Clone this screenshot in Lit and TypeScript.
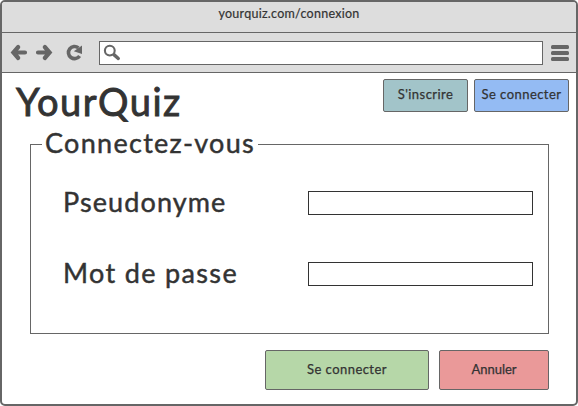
import { LitElement, html, css } from "lit";
import { customElement } from "lit/decorators.js";

@customElement("app-root")
export class AppRoot extends LitElement {
  static styles = css`
    :host {
      display: block;
      width: 578px;
      height: 406px;
      overflow: hidden;
      background: #fff;
      color: #333;
      font-family: Lato, "Liberation Sans", sans-serif;
    }
    * { box-sizing: border-box; }
    .window {
      width: 578px;
      height: 406px;
      border: 2px solid #666;
      border-radius: 5px;
      overflow: hidden;
      display: flex;
      flex-direction: column;
      background: #fff;
    }
    .titlebar {
      height: 31px;
      flex: none;
      border-bottom: 1px solid #666;
      background: #ddd;
      text-align: center;
      font-size: 12.5px;
      line-height: 24px;
      letter-spacing: 0.27px;
      -webkit-text-stroke: 0.2px #333;
    }
    .toolbar {
      height: 40px;
      flex: none;
      display: flex;
      align-items: center;
      padding: 0 7px 0 8px;
      background: #ddd;
      border-bottom: 1px solid #666;
    }
    .nav { width: 89px; height: 24px; flex: none; display: block; }
    .address {
      width: 444px;
      height: 24px;
      border: 1px solid #666;
      background: #fff;
      flex: none;
    }
    .address svg { display: block; }
    .menu { width: 18px; height: 24px; margin-left: 8px; display: block; }
    .header {
      display: flex;
      justify-content: space-between;
      padding: 6px 7px 0 14px;
      height: 52px;
    }
    h1 {
      margin: 0;
      font-size: 38px;
      font-weight: 400;
      line-height: 44px;
      letter-spacing: 1.5px;
      -webkit-text-stroke: 0.9px #333;
    }
    .actions { display: flex; gap: 6px; }
    button {
      margin: 0;
      padding: 0 0 3px;
      border: 1px solid #666;
      border-radius: 2px;
      color: #333;
      font: 400 13px/18px Lato, "Liberation Sans", sans-serif;
      letter-spacing: 0.45px;
      -webkit-text-stroke: 0.25px #333;
    }
    .signup { width: 85px; height: 33px; background: #a2c4c9; }
    .login { width: 95px; height: 33px; background: #94bbf3; }
    fieldset {
      margin: 4px 0 0 28px;
      width: 519px;
      height: 205px;
      border: 1px solid #666;
      padding: 0 15px 0 32px;
      min-width: 0;
      font-size: 27px;
      -webkit-text-stroke: 0.45px #333;
    }
    legend {
      height: 30px;
      line-height: 28px;
      padding: 0 3px;
      margin-left: -21px;
      width: 216px;
      white-space: nowrap;
      letter-spacing: 1.3px;
    }
    .row {
      display: flex;
      justify-content: space-between;
      align-items: center;
      height: 24px;
      margin-top: 32px;
      letter-spacing: 1.1px;
    }
    .row + .row { margin-top: 47px; letter-spacing: 1.35px; }
    label { padding-bottom: 4px; }
    input {
      width: 225px;
      height: 24px;
      border: 1px solid #333;
      border-radius: 0;
      background: #fff;
      padding: 0 4px;
      margin: 0;
      outline: none;
    }
    .footer {
      display: flex;
      justify-content: flex-end;
      gap: 10px;
      padding: 16px 27px 0 0;
    }
    .submit { width: 164px; height: 40px; background: #b6d7a8; }
    .cancel { width: 110px; height: 40px; background: #ea9999; letter-spacing: 0; }
  `;

  render() {
    return html`
      <div class="window">
        <div class="titlebar">yourquiz.com/connexion</div>
        <div class="toolbar">
          <svg class="nav" viewBox="10 41 89 24" fill="none" stroke="#666" stroke-linejoin="miter" stroke-linecap="round">
            <path d="M18.2 47 L13.4 52.5 L18.2 58 M14 52.5 H25" stroke-width="4.2" />
            <path d="M44.8 47 L49.6 52.5 L44.8 58 M49 52.5 H38" stroke-width="4.2" />
            <path d="M79.6 56 A6.1 6.1 0 1 1 78.4 47.8" stroke-width="3.6" stroke-linecap="butt" />
            <path d="M82 45.5 V54 L73.8 51.2 Z" fill="#666" stroke="none" />
          </svg>
          <div class="address">
            <svg width="24" height="22" viewBox="100 42 24 22" fill="none" stroke="#666" stroke-linecap="round">
              <circle cx="109.8" cy="50.6" r="4.9" stroke-width="2.1" />
              <path d="M114.2 54.9 L118.3 58.5" stroke-width="3.4" />
            </svg>
          </div>
          <svg class="menu" viewBox="0 0 18 24" fill="#666">
            <rect y="4" width="18" height="4" rx="1.5" />
            <rect y="10" width="18" height="4" rx="1.5" />
            <rect y="16" width="18" height="4" rx="1.5" />
          </svg>
        </div>
        <div class="header">
          <h1>YourQuiz</h1>
          <div class="actions">
            <button class="signup">S'inscrire</button>
            <button class="login">Se connecter</button>
          </div>
        </div>
        <fieldset>
          <legend>Connectez-vous</legend>
          <div class="row"><label for="user">Pseudonyme</label><input id="user" type="text" /></div>
          <div class="row"><label for="pass">Mot de passe</label><input id="pass" type="password" /></div>
        </fieldset>
        <div class="footer">
          <button class="submit">Se connecter</button>
          <button class="cancel">Annuler</button>
        </div>
      </div>
    `;
  }
}
